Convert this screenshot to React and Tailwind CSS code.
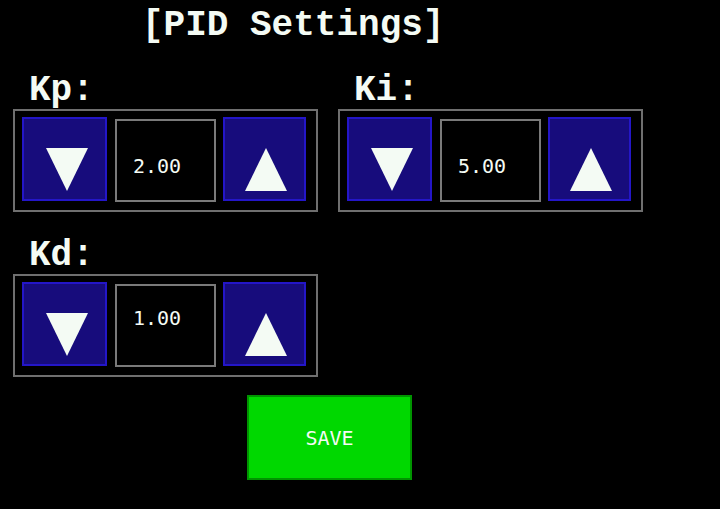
const PANELS = [
  { id: "kp", label: "Kp:", value: "2.00", valueTop: "pt-[35px]" },
  { id: "ki", label: "Ki:", value: "5.00", valueTop: "pt-[35px]" },
  { id: "kd", label: "Kd:", value: "1.00", valueTop: "pt-[22px]" },
];

const SERIF_MONO = '"Courier New", "Nimbus Mono PS", "Nimbus Mono L", FreeMono, "Liberation Mono", monospace';

function Triangle({ up }) {
  return (
    <svg width="42" height="43" viewBox="0 0 42 43" className="block">
      {up ? (
        <polygon points="21,0 42,43 0,43" fill="#f4fbf4" />
      ) : (
        <polygon points="0,0 42,0 21,43" fill="#f4fbf4" />
      )}
    </svg>
  );
}

function Stepper({ label, value, valueTop }) {
  return (
    <div className="flex flex-col">
      <div
        className="h-[36px] pl-[16px] text-[36px] leading-[36px] font-bold text-[#f4fbf4]"
        style={{ fontFamily: SERIF_MONO }}
      >
        {label}
      </div>
      <div className="w-[305px] h-[103px] border-2 border-[#6f6f6f] flex items-start pl-[7px] pt-[6px]">
        <button className="w-[85px] h-[84px] bg-[#170c7c] border-2 border-[#2416c8] pl-[22px] pt-[21px]">
          <Triangle />
        </button>
        <div
          className={`ml-[8px] mt-[2px] w-[101px] h-[83px] border-2 border-[#7a7a7a] pl-[16px] ${valueTop} text-[20px] leading-[20px] text-[#f4fbf4]`}
          style={{ fontFamily: '"DejaVu Sans Mono", monospace' }}
        >
          {value}
        </div>
        <button className="ml-[7px] w-[83px] h-[84px] bg-[#170c7c] border-2 border-[#2416c8] pl-[20px] pt-[21px]">
          <Triangle up />
        </button>
      </div>
    </div>
  );
}

export default function App() {
  return (
    <div className="w-[720px] h-[509px] bg-black overflow-hidden">
      <div
        className="pt-[8px] pl-[142px] h-[44px] text-[36px] leading-[36px] font-bold text-[#f4fbf4] whitespace-pre"
        style={{ fontFamily: SERIF_MONO }}
      >
        [PID Settings]
      </div>

      <div className="pl-[13px] pt-[29px] grid grid-cols-[305px_305px] gap-x-[20px] gap-y-[26px]">
        {PANELS.map((p) => (
          <Stepper key={p.id} {...p} />
        ))}
      </div>

      <div className="pl-[247px] pt-[18px]">
        <button
          className="w-[165px] h-[85px] bg-[#00d800] border-2 border-[#009400] flex items-center justify-center text-[20px] leading-[20px] text-[#f4fbf4]"
          style={{ fontFamily: '"DejaVu Sans Mono", monospace' }}
        >
          SAVE
        </button>
      </div>
    </div>
  );
}
